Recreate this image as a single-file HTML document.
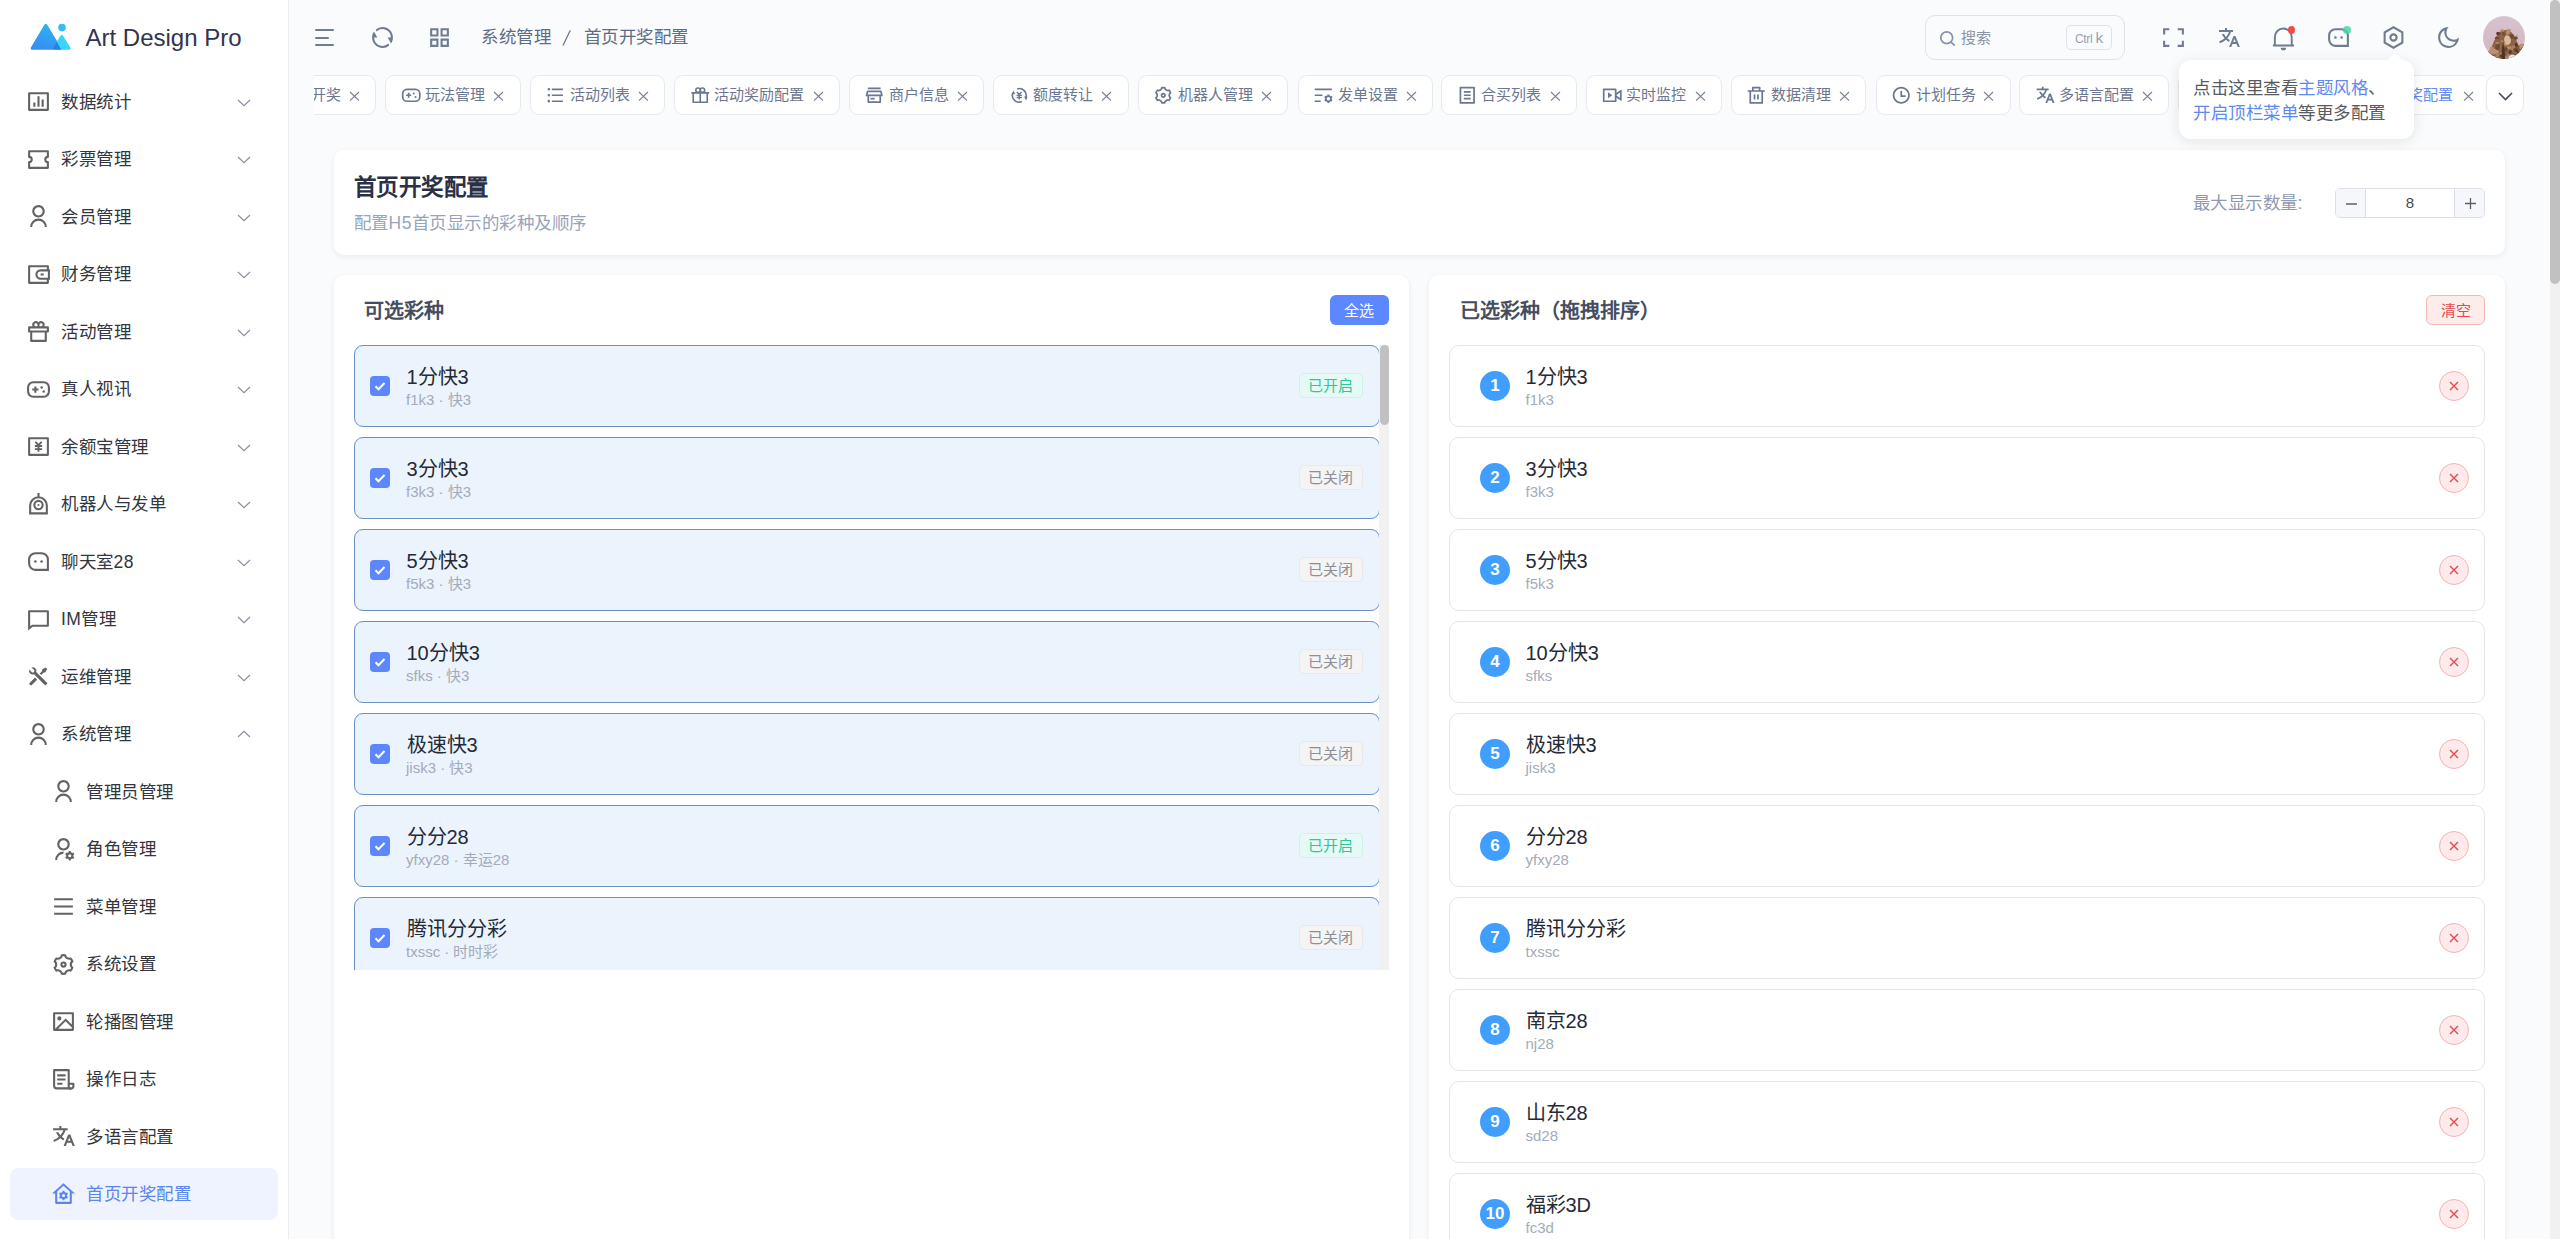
<!DOCTYPE html><html lang="zh-CN"><head><meta charset="utf-8"><title>首页开奖配置</title><style>
*{box-sizing:border-box;margin:0;padding:0}
html,body{width:2560px;height:1239px;overflow:hidden}
body{background:#fafbfc;font-family:"Liberation Sans",sans-serif;position:relative;color:#2d3039}
.ic{position:absolute;display:block}
#side{position:absolute;left:0;top:0;width:289px;height:1239px;background:#fff;border-right:1px solid #e9ebf0}
.logo-t{position:absolute;left:85.5px;top:22.5px;font-size:24px;line-height:30px;color:#30354f;white-space:nowrap}
.mt{position:absolute;left:61px;font-size:17.5px;letter-spacing:0.5px;line-height:24px;white-space:nowrap;color:#33363e}
.act{position:absolute;left:10px;width:268px;height:51.5px;border-radius:8px;background:#eef3ff}
.hamb i{position:absolute;left:315px;height:2.2px;background:#707c90;border-radius:1px}
.bc{position:absolute;top:24px;font-size:17.5px;letter-spacing:0.5px;line-height:26px;color:#5f6d84;white-space:nowrap}
.search{position:absolute;left:1925px;top:15px;width:200px;height:45px;border:1px solid #dfe2e8;border-radius:10px}
.stxt{position:absolute;left:1960.5px;top:26px;font-size:15px;line-height:24px;color:#8a94a6}
.kbd{position:absolute;left:2066px;top:25px;width:46px;height:25px;border:1px solid #dfe2e8;border-radius:5px;font-size:12.5px;line-height:23px;text-align:center;color:#98a1b2;letter-spacing:-0.3px}
.dot{position:absolute;width:8px;height:8px;border-radius:50%}
#tabs{position:absolute;left:314px;top:75px;width:2171px;height:40px;overflow:hidden}
.tab{position:absolute;top:0;height:39.5px;background:#fff;border:1px solid #e7e9ee;border-radius:9px}
.tt{position:absolute;left:39px;top:7px;font-size:15px;line-height:24px;white-space:nowrap}
.tabmore{position:absolute;left:2485.6px;top:75.3px;width:38.8px;height:39.4px;background:#fff;border:1px solid #e7e9ee;border-radius:10px}
.card{position:absolute;background:#fff;border-radius:10px;box-shadow:0 2px 6px rgba(20,30,60,0.07)}
.h1{position:absolute;left:353.5px;top:173px;font-size:22.5px;letter-spacing:-0.5px;line-height:30px;font-weight:bold;color:#2a3146;white-space:nowrap}
.h1s{position:absolute;left:353.5px;top:210px;font-size:17.5px;letter-spacing:0.5px;line-height:26px;color:#99a4ba;white-space:nowrap}
.lbl{position:absolute;left:2192.5px;top:190px;font-size:17.5px;letter-spacing:0.5px;line-height:26px;color:#8f9ab0;white-space:nowrap}
.inum{position:absolute;left:2335px;top:188px;width:150px;height:30px;border:1px solid #dcdfe6;border-radius:5px;overflow:hidden;background:#fff}
.ib{position:absolute;top:0;width:30px;height:28px;background:#f5f7fa;color:#555b66;font-size:18px;line-height:27px;text-align:center}
.ib.l{left:0;border-right:1px solid #dcdfe6}
.ib.r{right:0;border-left:1px solid #dcdfe6}
.iv{position:absolute;left:30px;right:30px;top:0;height:28px;text-align:center;font-size:15px;line-height:28px;color:#45494f}
.ptitle{position:absolute;top:297px;font-size:20px;line-height:28px;font-weight:bold;color:#454d61;white-space:nowrap}
.btnp{position:absolute;left:1329.75px;top:295px;width:59px;height:30px;border-radius:6px;background:#5d87ff;color:#fff;font-size:15px;line-height:32px;text-align:center}
.btnd{position:absolute;left:2426px;top:295px;width:59px;height:30px;border-radius:6px;background:#fdecec;border:1px solid #f2b7b7;color:#e24b4b;font-size:15px;line-height:30px;text-align:center}
#llist{position:absolute;left:354px;top:345px;width:1035px;height:625px;overflow:hidden}
.li{position:absolute;left:0;width:1026px;height:81.5px;border:1px solid #6890c6;border-radius:9px;background:#ebf3fd}
.cb{position:absolute;left:15px;top:30px;width:20px;height:20px;border-radius:4px;background:#5d87ff}
.it{position:absolute;left:51.5px;top:18px;font-size:20px;line-height:26px;color:#252a36;white-space:nowrap}
.is{position:absolute;left:51px;top:43.5px;font-size:15px;line-height:20px;color:#a3abba;white-space:nowrap}
.tag{position:absolute;left:944px;top:27px;width:63.5px;height:24.5px;border-radius:5px;font-size:15px;line-height:24px;text-align:center}
.tag.on{background:#e6faf5;border:1px solid #cdf3e8;color:#2cc79c}
.tag.off{background:#f4f4f5;border:1px solid #e9e9eb;color:#8d9099}
.sbtrack{position:absolute;left:1025px;top:0;width:10px;height:625px;background:#f1f1f1}
.sbthumb{position:absolute;left:0.5px;top:0;width:9.5px;height:80px;border-radius:5px;background:#c1c1c1}
.ri{position:absolute;left:1449px;width:1036px;height:81.5px;border:1px solid #e4e6eb;border-radius:10px;background:#fff}
.num{position:absolute;left:30px;top:25px;width:30px;height:30px;border-radius:50%;background:#409eff;color:#fff;font-size:17px;font-weight:bold;line-height:30px;text-align:center}
.rm{position:absolute;left:989px;top:25px;width:30px;height:30px;border-radius:50%;background:#feeaea;border:1px solid #f3b3b3}
.pop{position:absolute;left:2178.5px;top:60px;width:235.5px;height:79px;background:#fff;border-radius:12px;box-shadow:0 2px 14px rgba(0,0,0,0.10)}
.arrow{position:absolute;left:210px;top:-5px;width:11.3px;height:11.3px;background:#fff;transform:rotate(45deg);border-radius:2px}
.pt{position:absolute;left:14.5px;font-size:17.5px;letter-spacing:0.5px;line-height:24px;color:#585b62;white-space:nowrap}
.bl{color:#6289f0}
.psb{position:absolute;left:2550px;top:0;width:10px;height:1239px;background:#f1f1f1}
.psbt{position:absolute;left:0;top:0;width:10px;height:284px;border-radius:5px;background:#c1c1c1}
</style></head><body><div id="side">
<svg class="ic" style="left:30px;top:23px;width:41px;height:28px" viewBox="0 0 41 28"><defs><linearGradient id="lg1" x1="0.6" y1="0" x2="0.2" y2="1"><stop offset="0" stop-color="#2ab2f6"/><stop offset="1" stop-color="#3a8cf0"/></linearGradient><clipPath id="bigc"><path d="M15.8 0.3L31.3 26.7H0.3Z"/></clipPath></defs><path d="M15.8 2.2L29.6 25.2H2.2Z" fill="url(#lg1)" stroke="url(#lg1)" stroke-width="3" stroke-linejoin="round"/><path d="M31.75 13.6L39.2 25.2H24.3Z" fill="#3dd4fb" stroke="#3dd4fb" stroke-width="3" stroke-linejoin="round"/><g clip-path="url(#bigc)"><path d="M31.75 13.6L39.2 25.2H24.3Z" fill="#2283e3" stroke="#2283e3" stroke-width="3" stroke-linejoin="round"/></g><circle cx="32" cy="4.6" r="3.8" fill="#38baf5"/></svg>
<div class="logo-t">Art Design Pro</div>
<svg class="ic" style="left:26px;top:89.0px;width:25px;height:25px;color:#636363" viewBox="0 0 24 24" fill="currentColor"><path d="M3 3h18a1 1 0 0 1 1 1v16a1 1 0 0 1-1 1H3a1 1 0 0 1-1-1V4a1 1 0 0 1 1-1zm1 2v14h16V5H4zm3 8h2v4H7v-4zm4-6h2v10h-2V7zm4 3h2v7h-2v-7z"/></svg>
<div class="mt" style="top:89.50px">数据统计</div>
<svg class="ic" style="left:237px;top:98.50px;width:14px;height:8px" viewBox="0 0 14 8"><path d="M1 1L7 6.7 13 1" fill="none" stroke="#8a90a0" stroke-width="1.2"/></svg>
<svg class="ic" style="left:26px;top:146.5px;width:25px;height:25px;color:#636363" viewBox="0 0 24 24" fill="currentColor"><path fill="none" stroke="currentColor" stroke-width="2" stroke-linejoin="round" d="M3 4H21V9.5A2.5 2.5 0 0 0 21 14.5V20H3V14.5A2.5 2.5 0 0 0 3 9.5Z"/></svg>
<div class="mt" style="top:147.00px">彩票管理</div>
<svg class="ic" style="left:237px;top:156.00px;width:14px;height:8px" viewBox="0 0 14 8"><path d="M1 1L7 6.7 13 1" fill="none" stroke="#8a90a0" stroke-width="1.2"/></svg>
<svg class="ic" style="left:26px;top:204.0px;width:25px;height:25px;color:#636363" viewBox="0 0 24 24" fill="currentColor"><path d="M4 22a8 8 0 1 1 16 0h-2a6 6 0 1 0-12 0H4zm8-9c-3.315 0-6-2.685-6-6s2.685-6 6-6 6 2.685 6 6-2.685 6-6 6zm0-2c2.21 0 4-1.790 4-4s-1.79-4-4-4-4 1.79-4 4 1.79 4 4 4z"/></svg>
<div class="mt" style="top:204.50px">会员管理</div>
<svg class="ic" style="left:237px;top:213.50px;width:14px;height:8px" viewBox="0 0 14 8"><path d="M1 1L7 6.7 13 1" fill="none" stroke="#8a90a0" stroke-width="1.2"/></svg>
<svg class="ic" style="left:26px;top:261.5px;width:25px;height:25px;color:#636363" viewBox="0 0 24 24" fill="currentColor"><path d="M22 7h1v10h-1v3a1 1 0 0 1-1 1H3a1 1 0 0 1-1-1V4a1 1 0 0 1 1-1h18a1 1 0 0 1 1 1v3zm-2 10h-6a5 5 0 0 1 0-10h6V5H4v14h16v-2zm1-2V9h-7a3 3 0 0 0 0 6h7zm-7-4h3v2h-3v-2z"/></svg>
<div class="mt" style="top:262.00px">财务管理</div>
<svg class="ic" style="left:237px;top:271.00px;width:14px;height:8px" viewBox="0 0 14 8"><path d="M1 1L7 6.7 13 1" fill="none" stroke="#8a90a0" stroke-width="1.2"/></svg>
<svg class="ic" style="left:26px;top:319.0px;width:25px;height:25px;color:#636363" viewBox="0 0 24 24" fill="currentColor"><path d="M14.5 2a3.5 3.5 0 0 1 3.163 5.001L21 7a1 1 0 0 1 1 1v4a1 1 0 0 1-1 1h-1v8a1 1 0 0 1-1 1H5a1 1 0 0 1-1-1v-8H3a1 1 0 0 1-1-1V8a1 1 0 0 1 1-1l3.337.001a3.5 3.5 0 0 1 5.664-3.95A3.48 3.48 0 0 1 14.5 2zM18 13H6v7h12v-7zm2-4H4v2h16V9zM9.5 4a1.5 1.5 0 0 0-.144 2.993L9.5 7H11V5.5a1.5 1.5 0 0 0-1.356-1.493L9.5 4zm5 0l-.144.007a1.5 1.5 0 0 0-1.35 1.349L13 5.5V7h1.5l.144-.007a1.5 1.5 0 0 0 0-2.986L14.5 4z"/></svg>
<div class="mt" style="top:319.50px">活动管理</div>
<svg class="ic" style="left:237px;top:328.50px;width:14px;height:8px" viewBox="0 0 14 8"><path d="M1 1L7 6.7 13 1" fill="none" stroke="#8a90a0" stroke-width="1.2"/></svg>
<svg class="ic" style="left:26px;top:376.5px;width:25px;height:25px;color:#636363" viewBox="0 0 24 24" fill="currentColor"><path d="M17 4a6 6 0 0 1 6 6v4a6 6 0 0 1-6 6H7a6 6 0 0 1-6-6v-4a6 6 0 0 1 6-6h10zm0 2H7a4 4 0 0 0-4 4v4a4 4 0 0 0 4 4h10a4 4 0 0 0 4-4v-4a4 4 0 0 0-4-4zm-7 3v2h2v2H10v2H8v-2H6v-2h2V9h2z"/><circle cx="17" cy="14" r="1.2"/><circle cx="15" cy="10" r="1.2"/></svg>
<div class="mt" style="top:377.00px">真人视讯</div>
<svg class="ic" style="left:237px;top:386.00px;width:14px;height:8px" viewBox="0 0 14 8"><path d="M1 1L7 6.7 13 1" fill="none" stroke="#8a90a0" stroke-width="1.2"/></svg>
<svg class="ic" style="left:26px;top:434.0px;width:25px;height:25px;color:#636363" viewBox="0 0 24 24" fill="currentColor"><path d="M3 3h18a1 1 0 0 1 1 1v16a1 1 0 0 1-1 1H3a1 1 0 0 1-1-1V4a1 1 0 0 1 1-1zm1 2v14h16V5H4z"/><path fill="none" stroke="currentColor" stroke-width="1.8" d="M9 7.5l3 3.2 3-3.2M12 10.7V17M8.5 11.5h7M8.5 14.5h7"/></svg>
<div class="mt" style="top:434.50px">余额宝管理</div>
<svg class="ic" style="left:237px;top:443.50px;width:14px;height:8px" viewBox="0 0 14 8"><path d="M1 1L7 6.7 13 1" fill="none" stroke="#8a90a0" stroke-width="1.2"/></svg>
<svg class="ic" style="left:26px;top:491.5px;width:25px;height:25px;color:#636363" viewBox="0 0 24 24" fill="currentColor"><path fill="none" stroke="currentColor" stroke-width="2" d="M4 20.5V13A8 8 0 0 1 20 13V20.5ZM12 1V5"/><circle cx="12" cy="12.5" r="4" fill="none" stroke="currentColor" stroke-width="2"/><circle cx="12" cy="12.5" r="1"/></svg>
<div class="mt" style="top:492.00px">机器人与发单</div>
<svg class="ic" style="left:237px;top:501.00px;width:14px;height:8px" viewBox="0 0 14 8"><path d="M1 1L7 6.7 13 1" fill="none" stroke="#8a90a0" stroke-width="1.2"/></svg>
<svg class="ic" style="left:26px;top:549.0px;width:25px;height:25px;color:#636363" viewBox="0 0 24 24" fill="currentColor"><path fill="none" stroke="currentColor" stroke-width="2" d="M9 4H15A6 6 0 0 1 21 10V20H9A6 6 0 0 1 3 14V10A6 6 0 0 1 9 4Z"/><circle cx="9" cy="12" r="1.25"/><circle cx="15" cy="12" r="1.25"/></svg>
<div class="mt" style="top:549.50px">聊天室28</div>
<svg class="ic" style="left:237px;top:558.50px;width:14px;height:8px" viewBox="0 0 14 8"><path d="M1 1L7 6.7 13 1" fill="none" stroke="#8a90a0" stroke-width="1.2"/></svg>
<svg class="ic" style="left:26px;top:606.5px;width:25px;height:25px;color:#636363" viewBox="0 0 24 24" fill="currentColor"><path d="M6.455 19L2 22.5V4a1 1 0 0 1 1-1h18a1 1 0 0 1 1 1v14a1 1 0 0 1-1 1H6.455zm-.692-2H20V5H4v13.385L5.763 17z"/></svg>
<div class="mt" style="top:607.00px">IM管理</div>
<svg class="ic" style="left:237px;top:616.00px;width:14px;height:8px" viewBox="0 0 14 8"><path d="M1 1L7 6.7 13 1" fill="none" stroke="#8a90a0" stroke-width="1.2"/></svg>
<svg class="ic" style="left:26px;top:664.0px;width:25px;height:25px;color:#636363" viewBox="0 0 24 24" fill="currentColor"><path d="M5.33 3.271a3.5 3.5 0 0 1 4.472 4.474L20.647 18.59l-2.122 2.121L7.68 9.867a3.5 3.5 0 0 1-4.472-4.474L5.444 7.63a1.5 1.5 0 1 0 2.121-2.121L5.329 3.27zm10.367 1.884l3.182-1.768 1.414 1.414-1.768 3.182-1.768.354-2.12 2.121-1.415-1.414 2.121-2.121.354-1.768zm-7.071 7.778l2.121 2.122-4.95 4.95A1.5 1.5 0 0 1 3.58 17.99l.097-.107 4.95-4.95z"/></svg>
<div class="mt" style="top:664.50px">运维管理</div>
<svg class="ic" style="left:237px;top:673.50px;width:14px;height:8px" viewBox="0 0 14 8"><path d="M1 1L7 6.7 13 1" fill="none" stroke="#8a90a0" stroke-width="1.2"/></svg>
<svg class="ic" style="left:26px;top:721.5px;width:25px;height:25px;color:#636363" viewBox="0 0 24 24" fill="currentColor"><path d="M4 22a8 8 0 1 1 16 0h-2a6 6 0 1 0-12 0H4zm8-9c-3.315 0-6-2.685-6-6s2.685-6 6-6 6 2.685 6 6-2.685 6-6 6zm0-2c2.21 0 4-1.790 4-4s-1.79-4-4-4-4 1.79-4 4 1.79 4 4 4z"/></svg>
<div class="mt" style="top:722.00px">系统管理</div>
<svg class="ic" style="left:237px;top:730.00px;width:14px;height:8px" viewBox="0 0 14 8"><path d="M1 7L7 1.3 13 7" fill="none" stroke="#8a90a0" stroke-width="1.2"/></svg>
<svg class="ic" style="left:51px;top:779.0px;width:25px;height:25px;color:#636363" viewBox="0 0 24 24" fill="currentColor"><path d="M4 22a8 8 0 1 1 16 0h-2a6 6 0 1 0-12 0H4zm8-9c-3.315 0-6-2.685-6-6s2.685-6 6-6 6 2.685 6 6-2.685 6-6 6zm0-2c2.21 0 4-1.790 4-4s-1.79-4-4-4-4 1.79-4 4 1.79 4 4 4z"/></svg>
<div class="mt" style="left:86px;top:779.50px;color:#33363e">管理员管理</div>
<svg class="ic" style="left:51px;top:836.5px;width:25px;height:25px;color:#636363" viewBox="0 0 24 24" fill="currentColor"><path d="M12 14v2a6 6 0 0 0-6 6H4a8 8 0 0 1 8-8zm0-1c-3.315 0-6-2.685-6-6s2.685-6 6-6 6 2.685 6 6-2.685 6-6 6zm0-2c2.21 0 4-1.79 4-4s-1.79-4-4-4-4 1.79-4 4 1.79 4 4 4zm2.595 7.812a3.51 3.51 0 0 1 0-1.623l-.992-.573 1-1.732.992.573A3.496 3.496 0 0 1 17 14.645V13.5h2v1.145c.532.158 1.012.44 1.405.812l.992-.573 1 1.732-.992.573a3.51 3.51 0 0 1 0 1.622l.992.573-1 1.732-.992-.573a3.496 3.496 0 0 1-1.405.812V22.5h-2v-1.145a3.496 3.496 0 0 1-1.405-.812l-.992.573-1-1.732.992-.572zM18 19.5a1.5 1.5 0 1 0 0-3 1.5 1.5 0 0 0 0 3z"/></svg>
<div class="mt" style="left:86px;top:837.00px;color:#33363e">角色管理</div>
<svg class="ic" style="left:51px;top:894.0px;width:25px;height:25px;color:#636363" viewBox="0 0 24 24" fill="currentColor"><path d="M3 4h18v2H3V4zm0 7h18v2H3v-2zm0 7h18v2H3v-2z"/></svg>
<div class="mt" style="left:86px;top:894.50px;color:#33363e">菜单管理</div>
<svg class="ic" style="left:51px;top:951.5px;width:25px;height:25px;color:#636363" viewBox="0 0 24 24" fill="currentColor"><path d="M3.34 17a10.018 10.018 0 0 1-.978-2.326 3 3 0 0 0 .002-5.347A9.99 9.99 0 0 1 4.865 4.99a3 3 0 0 0 4.631-2.674 9.99 9.99 0 0 1 5.007.002 3 3 0 0 0 4.632 2.672c.579.59 1.093 1.261 1.525 2.01.433.749.757 1.53.978 2.326a3 3 0 0 0-.002 5.347 9.99 9.99 0 0 1-2.501 4.337 3 3 0 0 0-4.631 2.674 9.99 9.99 0 0 1-5.007-.002 3 3 0 0 0-4.632-2.672A10.018 10.018 0 0 1 3.34 17zm5.66.196a4.993 4.993 0 0 1 2.25 2.77c.499.047 1 .048 1.499.001A4.993 4.993 0 0 1 15 17.197a4.993 4.993 0 0 1 3.525-.565c.29-.408.54-.843.748-1.298A4.993 4.993 0 0 1 18 12c0-1.26.47-2.437 1.273-3.334a8.126 8.126 0 0 0-.75-1.298A4.993 4.993 0 0 1 15 6.804a4.993 4.993 0 0 1-2.25-2.77c-.499-.047-1-.048-1.499-.001A4.993 4.993 0 0 1 9 6.803a4.993 4.993 0 0 1-3.525.565 7.99 7.99 0 0 0-.748 1.298A4.993 4.993 0 0 1 6 12c0 1.26-.47 2.437-1.273 3.334a8.126 8.126 0 0 0 .75 1.298A4.993 4.993 0 0 1 9 17.196zM12 15a3 3 0 1 1 0-6 3 3 0 0 1 0 6zm0-2a1 1 0 1 0 0-2 1 1 0 0 0 0 2z"/></svg>
<div class="mt" style="left:86px;top:952.00px;color:#33363e">系统设置</div>
<svg class="ic" style="left:51px;top:1009.0px;width:25px;height:25px;color:#636363" viewBox="0 0 24 24" fill="currentColor"><path d="M4.828 21l-.02.02-.021-.02H2.992A.993.993 0 0 1 2 20.007V3.993A1 1 0 0 1 2.992 3h18.016c.548 0 .992.445.992.993v16.014a1 1 0 0 1-.992.993H4.828zM20 15V5H4v14L14 9l6 6zm0 2.828l-6-6L6.828 19H20v-1.172zM8 11a2 2 0 1 1 0-4 2 2 0 0 1 0 4z"/></svg>
<div class="mt" style="left:86px;top:1009.50px;color:#33363e">轮播图管理</div>
<svg class="ic" style="left:51px;top:1066.5px;width:25px;height:25px;color:#636363" viewBox="0 0 24 24" fill="currentColor"><path fill="none" stroke="currentColor" stroke-width="2" stroke-linejoin="round" d="M17 16V3H3V18a2.5 2.5 0 0 0 2.5 2.5H19.5A2 2 0 0 0 21.5 18.5V16H17V19A1.5 1.5 0 0 0 19.5 20.5"/><path d="M6 7h8v2H6zM6 11h8v2H6zM6 15h5v2H6z"/></svg>
<div class="mt" style="left:86px;top:1067.00px;color:#33363e">操作日志</div>
<svg class="ic" style="left:51px;top:1124.0px;width:25px;height:25px;color:#636363" viewBox="0 0 24 24" fill="currentColor"><path d="M18.5 10l4.4 11h-2.155l-1.201-3h-4.09l-1.199 3h-2.154L16.5 10h2zM10 2v2h6v2h-1.968a18.222 18.222 0 0 1-3.62 6.301 14.864 14.864 0 0 0 2.336 1.707l-.751 1.878A17.015 17.015 0 0 1 9 13.725a16.676 16.676 0 0 1-6.201 3.548l-.536-1.929a14.7 14.7 0 0 0 5.327-3.042A18.078 18.078 0 0 1 4.767 8h2.24A16.032 16.032 0 0 0 9 10.877a16.165 16.165 0 0 0 2.91-4.876L2 6V4h6V2h2zm7.5 10.885L16.253 16h2.492L17.5 12.885z"/></svg>
<div class="mt" style="left:86px;top:1124.50px;color:#33363e">多语言配置</div>
<div class="act" style="top:1168.25px"></div>
<svg class="ic" style="left:51px;top:1181.5px;width:25px;height:25px;color:#5c86ec" viewBox="0 0 24 24" fill="currentColor"><path d="M19 21H5a1 1 0 0 1-1-1v-9H1l10.327-9.388a1 1 0 0 1 1.346 0L23 11h-3v9a1 1 0 0 1-1 1zM6 19h12V9.157l-6-5.454-6 5.454V19zm2.591-5.191a3.508 3.508 0 0 1 0-1.622l-.991-.573 1-1.732.991.573a3.495 3.495 0 0 1 1.404-.812V8.5h2v1.144c.532.159 1.01.44 1.403.812l.992-.573 1 1.731-.991.573a3.508 3.508 0 0 1 0 1.623l.991.572-1 1.731-.991-.572a3.495 3.495 0 0 1-1.404.811v1.145h-2V16.35a3.495 3.495 0 0 1-1.403-.812l-.992.573-1-1.731.991-.573zm3.404.688a1.5 1.5 0 1 0 0-2.998 1.5 1.5 0 0 0 0 2.998z"/></svg>
<div class="mt" style="left:86px;top:1182.00px;color:#5c86ec">首页开奖配置</div>
</div>
<div class="hamb"><i style="top:29px;width:19px"></i><i style="top:37px;width:13.5px"></i><i style="top:44px;width:19px"></i></div>
<svg class="ic" style="left:370px;top:25px;width:25px;height:25px;color:#707c90" viewBox="0 0 24 24" fill="currentColor"><path d="M5.463 4.433A9.961 9.961 0 0 1 12 2c5.523 0 10 4.477 10 10 0 2.136-.67 4.116-1.81 5.74L17 12h3A8 8 0 0 0 6.46 6.228l-.997-1.795zm13.074 15.134A9.961 9.961 0 0 1 12 22C6.477 22 2 17.523 2 12c0-2.136.67-4.116 1.81-5.74L7 12H4a8 8 0 0 0 13.54 5.772l.997 1.795z"/></svg>
<svg class="ic" style="left:427px;top:25px;width:25px;height:25px;color:#707c90" viewBox="0 0 24 24" fill="currentColor"><path fill="none" stroke="currentColor" stroke-width="2" d="M4 4h6v6H4zM14 4h6v6h-6zM4 14h6v6H4zM14 14h6v6h-6z"/></svg>
<div class="bc" style="left:481px">系统管理</div><svg class="ic" style="left:560px;top:28px;width:13px;height:20px" viewBox="0 0 13 20"><path d="M3 17.5L10.3 2.2" stroke="#6f7c92" stroke-width="1.3"/></svg><div class="bc" style="left:583.5px">首页开奖配置</div>
<div class="search"></div>
<svg class="ic" style="left:1938px;top:28.5px;width:19px;height:19px;color:#8792a6" viewBox="0 0 24 24" fill="none" stroke="currentColor" stroke-width="2.2"><circle cx="11" cy="11" r="7.5"/><path d="M16.5 16.5L21 21"/></svg>
<div class="stxt">搜索</div>
<div class="kbd"><span style="font-size:12px">Ctrl</span> <span style="font-size:15.5px">k</span></div>
<svg class="ic" style="left:2160.5px;top:25px;width:25px;height:25px;color:#707c90" viewBox="0 0 24 24" fill="currentColor"><path d="M16 3h6v6h-2V5h-4V3zM2 3h6v2H4v4H2V3zm18 16v-4h2v6h-6v-2h4zM4 19h4v2H2v-6h2v4z"/></svg>
<svg class="ic" style="left:2217px;top:25.5px;width:24px;height:24px;color:#707c90" viewBox="0 0 24 24" fill="currentColor"><path d="M18.5 10l4.4 11h-2.155l-1.201-3h-4.09l-1.199 3h-2.154L16.5 10h2zM10 2v2h6v2h-1.968a18.222 18.222 0 0 1-3.62 6.301 14.864 14.864 0 0 0 2.336 1.707l-.751 1.878A17.015 17.015 0 0 1 9 13.725a16.676 16.676 0 0 1-6.201 3.548l-.536-1.929a14.7 14.7 0 0 0 5.327-3.042A18.078 18.078 0 0 1 4.767 8h2.24A16.032 16.032 0 0 0 9 10.877a16.165 16.165 0 0 0 2.91-4.876L2 6V4h6V2h2zm7.5 10.885L16.253 16h2.492L17.5 12.885z"/></svg>
<svg class="ic" style="left:2271px;top:25.5px;width:25px;height:25px;color:#707c90" viewBox="0 0 24 24" fill="currentColor"><path fill="none" stroke="currentColor" stroke-width="1.85" d="M3.7 18.8V10.5A8.1 8.1 0 0 1 19.9 10.5V18.8M1.8 18.8H22.1"/><path d="M9.4 20.8H14.5A2.55 2.55 0 0 1 9.4 20.8Z"/></svg>
<div class="dot" style="left:2288px;top:26.2px;width:7px;background:#f74848"></div>
<svg class="ic" style="left:2325.5px;top:25px;width:25px;height:25px;color:#707c90" viewBox="0 0 24 24" fill="currentColor"><path fill="none" stroke="currentColor" stroke-width="2" d="M9 4H15A6 6 0 0 1 21 10V20H9A6 6 0 0 1 3 14V10A6 6 0 0 1 9 4Z"/><circle cx="9" cy="12" r="1.25"/><circle cx="15" cy="12" r="1.25"/></svg>
<div class="dot" style="left:2343px;top:26px;background:rgba(70,215,168,0.85)"></div>
<svg class="ic" style="left:2381px;top:25px;width:25px;height:25px;color:#707c90" viewBox="0 0 24 24" fill="currentColor"><path d="M12 1l9.5 5.5v11L12 23l-9.5-5.5v-11L12 1zm0 2.311L4.5 7.653v8.694l7.5 4.342 7.5-4.342V7.653L12 3.311zM12 16a4 4 0 1 1 0-8 4 4 0 0 1 0 8zm0-2a2 2 0 1 0 0-4 2 2 0 0 0 0 4z"/></svg>
<svg class="ic" style="left:2435.5px;top:25px;width:25px;height:25px;color:#707c90" viewBox="0 0 24 24" fill="currentColor"><path d="M10 7a7 7 0 0 0 12 4.9v.1c0 5.523-4.477 10-10 10S2 17.523 2 12 6.477 2 12 2h.1A6.979 6.979 0 0 0 10 7zm-6 5a8 8 0 0 0 15.062 3.762A9 9 0 0 1 8.238 4.938 7.999 7.999 0 0 0 4 12z"/></svg>
<svg class="ic" style="left:2483px;top:16px;width:42px;height:43px" viewBox="0 0 42 43"><defs><clipPath id="av"><ellipse cx="21" cy="21.5" rx="21" ry="21.4"/></clipPath><linearGradient id="avbg" x1="0" y1="0" x2="0" y2="1"><stop offset="0" stop-color="#d5c3cf"/><stop offset="1" stop-color="#d6b4bd"/></linearGradient></defs><g clip-path="url(#av)"><rect width="42" height="43" fill="url(#avbg)"/><path d="M5 43 C7 34 10 27 13 21 C16 15 20 13.5 24 14 C29 15 32 20 34 26 C36 31 39 35 42 38 L42 43Z" fill="#8a6246"/><ellipse cx="14.1" cy="29.8" rx="1.7" ry="1.7" fill="#7d563a"/><ellipse cx="25.7" cy="31.6" rx="2.5" ry="1.6" fill="#b89270"/><ellipse cx="14.0" cy="42.9" rx="1.9" ry="2.0" fill="#5a3a26"/><ellipse cx="19.5" cy="39.0" rx="1.5" ry="1.2" fill="#b89270"/><ellipse cx="19.3" cy="14.4" rx="2.3" ry="1.2" fill="#b89270"/><ellipse cx="7.5" cy="36.6" rx="2.4" ry="1.3" fill="#b89270"/><ellipse cx="30.4" cy="39.5" rx="2.2" ry="2.1" fill="#5a3a26"/><ellipse cx="30.8" cy="30.7" rx="2.5" ry="1.2" fill="#a98260"/><ellipse cx="13.4" cy="42.0" rx="1.8" ry="1.8" fill="#a98260"/><ellipse cx="20.3" cy="38.2" rx="2.0" ry="1.6" fill="#5a3a26"/><ellipse cx="25.9" cy="40.2" rx="2.2" ry="2.1" fill="#a98260"/><ellipse cx="39.7" cy="33.5" rx="1.4" ry="2.0" fill="#b89270"/><ellipse cx="36.8" cy="30.5" rx="2.2" ry="1.3" fill="#b89270"/><ellipse cx="15.1" cy="17.6" rx="1.9" ry="1.8" fill="#5a3a26"/><ellipse cx="9.0" cy="37.2" rx="1.8" ry="1.2" fill="#a98260"/><ellipse cx="20.5" cy="26.0" rx="1.4" ry="1.7" fill="#6e4a32"/><ellipse cx="18.8" cy="31.0" rx="2.0" ry="2.1" fill="#a98260"/><ellipse cx="23.2" cy="43.0" rx="1.6" ry="1.1" fill="#b89270"/><ellipse cx="24.2" cy="41.5" rx="2.6" ry="1.3" fill="#a98260"/><ellipse cx="38.6" cy="40.0" rx="1.7" ry="1.6" fill="#b89270"/><ellipse cx="19.1" cy="39.1" rx="2.2" ry="1.1" fill="#b89270"/><ellipse cx="15.2" cy="32.4" rx="2.2" ry="2.1" fill="#5a3a26"/><ellipse cx="39.2" cy="29.1" rx="2.0" ry="1.0" fill="#5a3a26"/><ellipse cx="18.8" cy="31.1" rx="1.4" ry="1.8" fill="#a98260"/><ellipse cx="21.9" cy="33.7" rx="1.7" ry="1.8" fill="#7d563a"/><ellipse cx="22.6" cy="31.1" rx="2.5" ry="1.0" fill="#a98260"/><ellipse cx="14.5" cy="27.2" rx="2.0" ry="1.4" fill="#a98260"/><ellipse cx="12.3" cy="36.0" rx="2.4" ry="1.3" fill="#5a3a26"/><ellipse cx="9.6" cy="37.6" rx="2.6" ry="1.8" fill="#8c6446"/><ellipse cx="16.5" cy="20.5" rx="2.3" ry="1.3" fill="#8c6446"/><ellipse cx="29.1" cy="32.8" rx="1.3" ry="1.7" fill="#a98260"/><ellipse cx="28.9" cy="20.5" rx="2.3" ry="2.2" fill="#6e4a32"/><ellipse cx="17.4" cy="32.9" rx="2.4" ry="1.5" fill="#8c6446"/><ellipse cx="34.4" cy="30.7" rx="2.4" ry="1.4" fill="#7d563a"/><ellipse cx="8.9" cy="32.0" rx="2.0" ry="1.5" fill="#b89270"/><ellipse cx="33.0" cy="21.9" rx="1.7" ry="1.5" fill="#5a3a26"/><ellipse cx="25.3" cy="15.0" rx="1.8" ry="1.2" fill="#5a3a26"/><ellipse cx="38.1" cy="39.5" rx="2.6" ry="1.5" fill="#7d563a"/><ellipse cx="13.6" cy="35.6" rx="2.4" ry="1.8" fill="#b89270"/><ellipse cx="38.8" cy="29.8" rx="2.4" ry="2.0" fill="#b89270"/><ellipse cx="33.3" cy="28.9" rx="1.5" ry="2.1" fill="#5a3a26"/><ellipse cx="25.6" cy="14.4" rx="2.2" ry="1.2" fill="#a98260"/><ellipse cx="24.3" cy="15.5" rx="2.5" ry="1.1" fill="#8c6446"/><ellipse cx="14.6" cy="39.0" rx="1.9" ry="1.9" fill="#a98260"/><ellipse cx="14.1" cy="21.9" rx="2.4" ry="1.2" fill="#6e4a32"/><ellipse cx="22.6" cy="30.6" rx="1.8" ry="1.9" fill="#8c6446"/><ellipse cx="15.1" cy="29.3" rx="1.8" ry="1.6" fill="#6e4a32"/><ellipse cx="35.1" cy="36.5" rx="1.3" ry="1.1" fill="#5a3a26"/><ellipse cx="39.1" cy="38.8" rx="1.3" ry="1.6" fill="#a98260"/><ellipse cx="19.1" cy="25.3" rx="1.6" ry="1.3" fill="#a98260"/><ellipse cx="20.6" cy="17.7" rx="1.2" ry="1.9" fill="#6e4a32"/><ellipse cx="25.3" cy="15.2" rx="1.8" ry="1.8" fill="#b89270"/><ellipse cx="18.9" cy="37.2" rx="2.1" ry="1.5" fill="#a98260"/><ellipse cx="27.3" cy="36.0" rx="1.6" ry="2.1" fill="#5a3a26"/><ellipse cx="21.7" cy="21.1" rx="2.0" ry="1.8" fill="#6e4a32"/><ellipse cx="33.3" cy="20.5" rx="1.4" ry="1.0" fill="#a98260"/><ellipse cx="18.7" cy="40.0" rx="2.3" ry="1.3" fill="#5a3a26"/><ellipse cx="29.5" cy="41.2" rx="2.2" ry="2.0" fill="#b89270"/><ellipse cx="32.9" cy="33.4" rx="2.2" ry="1.7" fill="#6e4a32"/><ellipse cx="33.6" cy="34.8" rx="1.9" ry="1.3" fill="#5a3a26"/><ellipse cx="9.4" cy="39.5" rx="1.5" ry="1.0" fill="#6e4a32"/><ellipse cx="22.4" cy="34.2" rx="1.6" ry="1.4" fill="#6e4a32"/><ellipse cx="7.2" cy="36.3" rx="1.9" ry="1.9" fill="#6e4a32"/><ellipse cx="24.9" cy="16.9" rx="2.0" ry="1.7" fill="#b89270"/><ellipse cx="39.9" cy="32.7" rx="1.8" ry="1.8" fill="#5a3a26"/><ellipse cx="14.6" cy="31.4" rx="2.5" ry="1.7" fill="#6e4a32"/><ellipse cx="18.8" cy="20.8" rx="2.5" ry="2.0" fill="#8c6446"/><ellipse cx="20.1" cy="30.5" rx="2.0" ry="2.1" fill="#7d563a"/><ellipse cx="22.4" cy="32.6" rx="2.5" ry="1.2" fill="#6e4a32"/><ellipse cx="22.9" cy="28.0" rx="2.2" ry="2.1" fill="#b89270"/><ellipse cx="24.5" cy="24" rx="3.4" ry="4.8" transform="rotate(-12 24.5 24)" fill="#dcb89e"/><path d="M20 27 C21.5 32 22 37 22 43 L18.5 43 C18.5 37 19 32 20 27Z" fill="#4e3222"/><ellipse cx="10" cy="35.5" rx="4" ry="3" fill="#c08d6e"/><path d="M25 43 C26 39.5 28 38 30.5 38.5 C32.5 39 33.5 40.5 33.5 43Z" fill="#dfe8ea"/></g></svg>
<div id="tabs">
<div class="tab" style="left:-73.00px;width:135.00px"><svg style="position:absolute;left:14.3px;top:8.7px;width:20.5px;height:20.5px;color:#6b7790" viewBox="0 0 24 24" fill="currentColor"><path d="M3.34 17a10.018 10.018 0 0 1-.978-2.326 3 3 0 0 0 .002-5.347A9.99 9.99 0 0 1 4.865 4.99a3 3 0 0 0 4.631-2.674 9.99 9.99 0 0 1 5.007.002 3 3 0 0 0 4.632 2.672c.579.59 1.093 1.261 1.525 2.01.433.749.757 1.53.978 2.326a3 3 0 0 0-.002 5.347 9.99 9.99 0 0 1-2.501 4.337 3 3 0 0 0-4.631 2.674 9.99 9.99 0 0 1-5.007-.002 3 3 0 0 0-4.632-2.672A10.018 10.018 0 0 1 3.34 17zm5.66.196a4.993 4.993 0 0 1 2.25 2.77c.499.047 1 .048 1.499.001A4.993 4.993 0 0 1 15 17.197a4.993 4.993 0 0 1 3.525-.565c.29-.408.54-.843.748-1.298A4.993 4.993 0 0 1 18 12c0-1.26.47-2.437 1.273-3.334a8.126 8.126 0 0 0-.75-1.298A4.993 4.993 0 0 1 15 6.804a4.993 4.993 0 0 1-2.25-2.77c-.499-.047-1-.048-1.499-.001A4.993 4.993 0 0 1 9 6.803a4.993 4.993 0 0 1-3.525.565 7.99 7.99 0 0 0-.748 1.298A4.993 4.993 0 0 1 6 12c0 1.26-.47 2.437-1.273 3.334a8.126 8.126 0 0 0 .75 1.298A4.993 4.993 0 0 1 9 17.196zM12 15a3 3 0 1 1 0-6 3 3 0 0 1 0 6zm0-2a1 1 0 1 0 0-2 1 1 0 0 0 0 2z"/></svg><span class="tt" style="color:#6b7790">首页开奖</span><svg style="position:absolute;right:15.5px;top:15px;width:11px;height:11px" viewBox="0 0 11 11"><path d="M1 1L10 9.6M10 1L1 9.6" stroke="#7a8497" stroke-width="1.2"/></svg></div>
<div class="tab" style="left:71.40px;width:135.20px"><svg style="position:absolute;left:14.3px;top:8.7px;width:20.5px;height:20.5px;color:#6b7790" viewBox="0 0 24 24" fill="currentColor"><path d="M17 4a6 6 0 0 1 6 6v4a6 6 0 0 1-6 6H7a6 6 0 0 1-6-6v-4a6 6 0 0 1 6-6h10zm0 2H7a4 4 0 0 0-4 4v4a4 4 0 0 0 4 4h10a4 4 0 0 0 4-4v-4a4 4 0 0 0-4-4zm-7 3v2h2v2H10v2H8v-2H6v-2h2V9h2z"/><circle cx="17" cy="14" r="1.2"/><circle cx="15" cy="10" r="1.2"/></svg><span class="tt" style="color:#6b7790">玩法管理</span><svg style="position:absolute;right:15.5px;top:15px;width:11px;height:11px" viewBox="0 0 11 11"><path d="M1 1L10 9.6M10 1L1 9.6" stroke="#7a8497" stroke-width="1.2"/></svg></div>
<div class="tab" style="left:215.50px;width:135.50px"><svg style="position:absolute;left:14.3px;top:8.7px;width:20.5px;height:20.5px;color:#6b7790" viewBox="0 0 24 24" fill="currentColor"><path d="M8 4h13v2H8V4zM4.5 6.5a1.5 1.5 0 1 1 0-3 1.5 1.5 0 0 1 0 3zm0 7a1.5 1.5 0 1 1 0-3 1.5 1.5 0 0 1 0 3zm0 6.9a1.5 1.5 0 1 1 0-3 1.5 1.5 0 0 1 0 3zM8 11h13v2H8v-2zm0 7h13v2H8v-2z"/></svg><span class="tt" style="color:#6b7790">活动列表</span><svg style="position:absolute;right:15.5px;top:15px;width:11px;height:11px" viewBox="0 0 11 11"><path d="M1 1L10 9.6M10 1L1 9.6" stroke="#7a8497" stroke-width="1.2"/></svg></div>
<div class="tab" style="left:360.25px;width:165.75px"><svg style="position:absolute;left:14.3px;top:8.7px;width:20.5px;height:20.5px;color:#6b7790" viewBox="0 0 24 24" fill="currentColor"><path fill="none" stroke="currentColor" stroke-width="1.9" d="M1.6 9.2H22.4M3.8 9.2V20.2H20.2V9.2M12 9.2V20.2"/><circle cx="9.4" cy="6.1" r="2.6" fill="none" stroke="currentColor" stroke-width="1.9"/><circle cx="14.6" cy="6.1" r="2.6" fill="none" stroke="currentColor" stroke-width="1.9"/></svg><span class="tt" style="color:#6b7790">活动奖励配置</span><svg style="position:absolute;right:15.5px;top:15px;width:11px;height:11px" viewBox="0 0 11 11"><path d="M1 1L10 9.6M10 1L1 9.6" stroke="#7a8497" stroke-width="1.2"/></svg></div>
<div class="tab" style="left:534.75px;width:135.50px"><svg style="position:absolute;left:14.3px;top:8.7px;width:20.5px;height:20.5px;color:#6b7790" viewBox="0 0 24 24" fill="currentColor"><path fill="none" stroke="currentColor" stroke-width="2" stroke-linejoin="round" d="M4.5 4H19.5M4.2 7.5H19.8L21 12.2H3ZM5 12.2V20H19V12.2"/><path d="M7.5 15h5v2h-5z"/></svg><span class="tt" style="color:#6b7790">商户信息</span><svg style="position:absolute;right:15.5px;top:15px;width:11px;height:11px" viewBox="0 0 11 11"><path d="M1 1L10 9.6M10 1L1 9.6" stroke="#7a8497" stroke-width="1.2"/></svg></div>
<div class="tab" style="left:679.25px;width:135.50px"><svg style="position:absolute;left:14.3px;top:8.7px;width:20.5px;height:20.5px;color:#6b7790" viewBox="0 0 24 24" fill="currentColor"><path fill="none" stroke="currentColor" stroke-width="1.9" d="M9.5 4.6A8 8 0 0 1 19.6 15M15 19.4A8 8 0 0 1 4.5 9"/><path d="M17.6 13.6L21.8 13.9 19.9 18zM3.3 11.2L7.2 10.2 5.1 6.4z"/><path fill="none" stroke="currentColor" stroke-width="1.7" d="M9.3 8.3L12 11.2 14.7 8.3M12 11.2V17M8.9 12.2h6.2M8.9 14.8h6.2"/></svg><span class="tt" style="color:#6b7790">额度转让</span><svg style="position:absolute;right:15.5px;top:15px;width:11px;height:11px" viewBox="0 0 11 11"><path d="M1 1L10 9.6M10 1L1 9.6" stroke="#7a8497" stroke-width="1.2"/></svg></div>
<div class="tab" style="left:823.50px;width:150.50px"><svg style="position:absolute;left:14.3px;top:8.7px;width:20.5px;height:20.5px;color:#6b7790" viewBox="0 0 24 24" fill="currentColor"><path d="M3.34 17a10.018 10.018 0 0 1-.978-2.326 3 3 0 0 0 .002-5.347A9.99 9.99 0 0 1 4.865 4.99a3 3 0 0 0 4.631-2.674 9.99 9.99 0 0 1 5.007.002 3 3 0 0 0 4.632 2.672c.579.59 1.093 1.261 1.525 2.01.433.749.757 1.53.978 2.326a3 3 0 0 0-.002 5.347 9.99 9.99 0 0 1-2.501 4.337 3 3 0 0 0-4.631 2.674 9.99 9.99 0 0 1-5.007-.002 3 3 0 0 0-4.632-2.672A10.018 10.018 0 0 1 3.34 17zm5.66.196a4.993 4.993 0 0 1 2.25 2.77c.499.047 1 .048 1.499.001A4.993 4.993 0 0 1 15 17.197a4.993 4.993 0 0 1 3.525-.565c.29-.408.54-.843.748-1.298A4.993 4.993 0 0 1 18 12c0-1.26.47-2.437 1.273-3.334a8.126 8.126 0 0 0-.75-1.298A4.993 4.993 0 0 1 15 6.804a4.993 4.993 0 0 1-2.25-2.77c-.499-.047-1-.048-1.499-.001A4.993 4.993 0 0 1 9 6.803a4.993 4.993 0 0 1-3.525.565 7.99 7.99 0 0 0-.748 1.298A4.993 4.993 0 0 1 6 12c0 1.26-.47 2.437-1.273 3.334a8.126 8.126 0 0 0 .75 1.298A4.993 4.993 0 0 1 9 17.196zM12 15a3 3 0 1 1 0-6 3 3 0 0 1 0 6zm0-2a1 1 0 1 0 0-2 1 1 0 0 0 0 2z"/></svg><span class="tt" style="color:#6b7790">机器人管理</span><svg style="position:absolute;right:15.5px;top:15px;width:11px;height:11px" viewBox="0 0 11 11"><path d="M1 1L10 9.6M10 1L1 9.6" stroke="#7a8497" stroke-width="1.2"/></svg></div>
<div class="tab" style="left:983.50px;width:135.50px"><svg style="position:absolute;left:14.3px;top:8.7px;width:20.5px;height:20.5px;color:#6b7790" viewBox="0 0 24 24" fill="currentColor"><path d="M2 18h7v2H2v-2zm0-7h9v2H2v-2zm0-7h20v2H2V4zm18.674 9.025l1.156-.391 1 1.732-.916.805a4.017 4.017 0 0 1 0 1.658l.916.805-1 1.732-1.156-.391c-.41.37-.898.655-1.435.83L19 21h-2l-.24-1.196a3.996 3.996 0 0 1-1.434-.83l-1.156.392-1-1.732.916-.805a4.017 4.017 0 0 1 0-1.658l-.916-.805 1-1.732 1.156.39c.41-.37.898-.655 1.435-.83L17 11h2l.24 1.196c.536.174 1.024.46 1.434.83zM18 18a2 2 0 1 0 0-4 2 2 0 0 0 0 4z"/></svg><span class="tt" style="color:#6b7790">发单设置</span><svg style="position:absolute;right:15.5px;top:15px;width:11px;height:11px" viewBox="0 0 11 11"><path d="M1 1L10 9.6M10 1L1 9.6" stroke="#7a8497" stroke-width="1.2"/></svg></div>
<div class="tab" style="left:1127.25px;width:135.75px"><svg style="position:absolute;left:14.3px;top:8.7px;width:20.5px;height:20.5px;color:#6b7790" viewBox="0 0 24 24" fill="currentColor"><path d="M20 22H4a1 1 0 0 1-1-1V3a1 1 0 0 1 1-1h16a1 1 0 0 1 1 1v18a1 1 0 0 1-1 1zm-1-2V4H5v16h14zM8 7h8v2H8V7zm0 4h8v2H8v-2zm0 4h8v2H8v-2z"/></svg><span class="tt" style="color:#6b7790">合买列表</span><svg style="position:absolute;right:15.5px;top:15px;width:11px;height:11px" viewBox="0 0 11 11"><path d="M1 1L10 9.6M10 1L1 9.6" stroke="#7a8497" stroke-width="1.2"/></svg></div>
<div class="tab" style="left:1272.25px;width:135.75px"><svg style="position:absolute;left:14.3px;top:8.7px;width:20.5px;height:20.5px;color:#6b7790" viewBox="0 0 24 24" fill="currentColor"><path d="M16 4a1 1 0 0 1 1 1v4.2l5.213-3.65a.5.5 0 0 1 .787.41v12.08a.5.5 0 0 1-.787.41L17 14.8V19a1 1 0 0 1-1 1H2a1 1 0 0 1-1-1V5a1 1 0 0 1 1-1h14zm-1 2H3v12h12V6zm2 5.6v.8l4 2.8V8.8l-4 2.8zM7 8.5l5 3.5-5 3.5v-7z"/></svg><span class="tt" style="color:#6b7790">实时监控</span><svg style="position:absolute;right:15.5px;top:15px;width:11px;height:11px" viewBox="0 0 11 11"><path d="M1 1L10 9.6M10 1L1 9.6" stroke="#7a8497" stroke-width="1.2"/></svg></div>
<div class="tab" style="left:1416.50px;width:135.75px"><svg style="position:absolute;left:14.3px;top:8.7px;width:20.5px;height:20.5px;color:#6b7790" viewBox="0 0 24 24" fill="currentColor"><path d="M7 6V3a1 1 0 0 1 1-1h8a1 1 0 0 1 1 1v3h5v2h-2v13a1 1 0 0 1-1 1H5a1 1 0 0 1-1-1V8H2V6h5zm2-2v2h6V4H9zM6 8v12h12V8H6zm3 3h2v6H9v-6zm4 0h2v6h-2v-6z"/></svg><span class="tt" style="color:#6b7790">数据清理</span><svg style="position:absolute;right:15.5px;top:15px;width:11px;height:11px" viewBox="0 0 11 11"><path d="M1 1L10 9.6M10 1L1 9.6" stroke="#7a8497" stroke-width="1.2"/></svg></div>
<div class="tab" style="left:1561.50px;width:135.10px"><svg style="position:absolute;left:14.3px;top:8.7px;width:20.5px;height:20.5px;color:#6b7790" viewBox="0 0 24 24" fill="currentColor"><path d="M12 22C6.477 22 2 17.523 2 12S6.477 2 12 2s10 4.477 10 10-4.477 10-10 10zm0-2a8 8 0 1 0 0-16 8 8 0 0 0 0 16zm1-8h4v2h-6V7h2v5z"/></svg><span class="tt" style="color:#6b7790">计划任务</span><svg style="position:absolute;right:15.5px;top:15px;width:11px;height:11px" viewBox="0 0 11 11"><path d="M1 1L10 9.6M10 1L1 9.6" stroke="#7a8497" stroke-width="1.2"/></svg></div>
<div class="tab" style="left:1705.40px;width:150.00px"><svg style="position:absolute;left:14.3px;top:8.7px;width:20.5px;height:20.5px;color:#6b7790" viewBox="0 0 24 24" fill="currentColor"><path d="M18.5 10l4.4 11h-2.155l-1.201-3h-4.09l-1.199 3h-2.154L16.5 10h2zM10 2v2h6v2h-1.968a18.222 18.222 0 0 1-3.62 6.301 14.864 14.864 0 0 0 2.336 1.707l-.751 1.878A17.015 17.015 0 0 1 9 13.725a16.676 16.676 0 0 1-6.201 3.548l-.536-1.929a14.7 14.7 0 0 0 5.327-3.042A18.078 18.078 0 0 1 4.767 8h2.24A16.032 16.032 0 0 0 9 10.877a16.165 16.165 0 0 0 2.91-4.876L2 6V4h6V2h2zm7.5 10.885L16.253 16h2.492L17.5 12.885z"/></svg><span class="tt" style="color:#6b7790">多语言配置</span><svg style="position:absolute;right:15.5px;top:15px;width:11px;height:11px" viewBox="0 0 11 11"><path d="M1 1L10 9.6M10 1L1 9.6" stroke="#7a8497" stroke-width="1.2"/></svg></div>
<div class="tab" style="left:1864.40px;width:135.60px"><svg style="position:absolute;left:14.3px;top:8.7px;width:20.5px;height:20.5px;color:#6b7790" viewBox="0 0 24 24" fill="currentColor"><path d="M20 22H4a1 1 0 0 1-1-1V3a1 1 0 0 1 1-1h16a1 1 0 0 1 1 1v18a1 1 0 0 1-1 1zm-1-2V4H5v16h14zM8 7h8v2H8V7zm0 4h8v2H8v-2zm0 4h8v2H8v-2z"/></svg><span class="tt" style="color:#6b7790">操作日志</span><svg style="position:absolute;right:15.5px;top:15px;width:11px;height:11px" viewBox="0 0 11 11"><path d="M1 1L10 9.6M10 1L1 9.6" stroke="#7a8497" stroke-width="1.2"/></svg></div>
<div class="tab" style="left:2009.00px;width:167.00px"><svg style="position:absolute;left:14.3px;top:8.7px;width:20.5px;height:20.5px;color:#6189ee" viewBox="0 0 24 24" fill="currentColor"><path d="M19 21H5a1 1 0 0 1-1-1v-9H1l10.327-9.388a1 1 0 0 1 1.346 0L23 11h-3v9a1 1 0 0 1-1 1zM6 19h12V9.157l-6-5.454-6 5.454V19zm2.591-5.191a3.508 3.508 0 0 1 0-1.622l-.991-.573 1-1.732.991.573a3.495 3.495 0 0 1 1.404-.812V8.5h2v1.144c.532.159 1.01.44 1.403.812l.992-.573 1 1.731-.991.573a3.508 3.508 0 0 1 0 1.623l.991.572-1 1.731-.991-.572a3.495 3.495 0 0 1-1.404.811v1.145h-2V16.35a3.495 3.495 0 0 1-1.403-.812l-.992.573-1-1.731.991-.573zm3.404.688a1.5 1.5 0 1 0 0-2.998 1.5 1.5 0 0 0 0 2.998z"/></svg><span class="tt" style="color:#6189ee">首页开奖配置</span><svg style="position:absolute;right:15.5px;top:15px;width:11px;height:11px" viewBox="0 0 11 11"><path d="M1 1L10 9.6M10 1L1 9.6" stroke="#7a8497" stroke-width="1.2"/></svg></div>
</div>
<div class="tabmore"><svg style="position:absolute;left:11.5px;top:15.5px;width:15px;height:9px" viewBox="0 0 15 9"><path d="M1 1L7.5 7.5 14 1" fill="none" stroke="#454b5a" stroke-width="1.6"/></svg></div>
<div class="card" style="left:334px;top:150px;width:2171px;height:105px"></div>
<div class="h1">首页开奖配置</div>
<div class="h1s">配置H5首页显示的彩种及顺序</div>
<div class="lbl">最大显示数量:</div>
<div class="inum"><div class="ib l"><svg style="position:absolute;left:9.5px;top:13.5px;width:11px;height:2px" viewBox="0 0 11 2"><path d="M0 1H11" stroke="#5a606b" stroke-width="1.3"/></svg></div><div class="iv">8</div><div class="ib r"><svg style="position:absolute;left:9.5px;top:8.5px;width:11px;height:11px" viewBox="0 0 11 11"><path d="M0 5.5H11M5.5 0V11" stroke="#5a606b" stroke-width="1.3"/></svg></div></div>
<div class="card" style="left:334px;top:275px;width:1075px;height:1000px"></div>
<div class="ptitle" style="left:364px">可选彩种</div>
<div class="btnp">全选</div>
<div id="llist">
<div class="li" style="top:0px"><div class="cb"><svg viewBox="0 0 20 20" style="width:20px;height:20px;position:absolute;left:0;top:0"><path d="M5.5 10.2l3 3 6-6.2" fill="none" stroke="#fff" stroke-width="2"/></svg></div><div class="it">1分快3</div><div class="is">f1k3 · 快3</div><div class="tag on">已开启</div></div>
<div class="li" style="top:92px"><div class="cb"><svg viewBox="0 0 20 20" style="width:20px;height:20px;position:absolute;left:0;top:0"><path d="M5.5 10.2l3 3 6-6.2" fill="none" stroke="#fff" stroke-width="2"/></svg></div><div class="it">3分快3</div><div class="is">f3k3 · 快3</div><div class="tag off">已关闭</div></div>
<div class="li" style="top:184px"><div class="cb"><svg viewBox="0 0 20 20" style="width:20px;height:20px;position:absolute;left:0;top:0"><path d="M5.5 10.2l3 3 6-6.2" fill="none" stroke="#fff" stroke-width="2"/></svg></div><div class="it">5分快3</div><div class="is">f5k3 · 快3</div><div class="tag off">已关闭</div></div>
<div class="li" style="top:276px"><div class="cb"><svg viewBox="0 0 20 20" style="width:20px;height:20px;position:absolute;left:0;top:0"><path d="M5.5 10.2l3 3 6-6.2" fill="none" stroke="#fff" stroke-width="2"/></svg></div><div class="it">10分快3</div><div class="is">sfks · 快3</div><div class="tag off">已关闭</div></div>
<div class="li" style="top:368px"><div class="cb"><svg viewBox="0 0 20 20" style="width:20px;height:20px;position:absolute;left:0;top:0"><path d="M5.5 10.2l3 3 6-6.2" fill="none" stroke="#fff" stroke-width="2"/></svg></div><div class="it">极速快3</div><div class="is">jisk3 · 快3</div><div class="tag off">已关闭</div></div>
<div class="li" style="top:460px"><div class="cb"><svg viewBox="0 0 20 20" style="width:20px;height:20px;position:absolute;left:0;top:0"><path d="M5.5 10.2l3 3 6-6.2" fill="none" stroke="#fff" stroke-width="2"/></svg></div><div class="it">分分28</div><div class="is">yfxy28 · 幸运28</div><div class="tag on">已开启</div></div>
<div class="li" style="top:552px"><div class="cb"><svg viewBox="0 0 20 20" style="width:20px;height:20px;position:absolute;left:0;top:0"><path d="M5.5 10.2l3 3 6-6.2" fill="none" stroke="#fff" stroke-width="2"/></svg></div><div class="it">腾讯分分彩</div><div class="is">txssc · 时时彩</div><div class="tag off">已关闭</div></div>
<div class="sbtrack"><div class="sbthumb"></div></div>
</div>
<div class="card" style="left:1428.5px;top:275px;width:1076.5px;height:1000px"></div>
<div class="ptitle" style="left:1460px">已选彩种（拖拽排序）</div>
<div class="btnd">清空</div>
<div class="ri" style="top:345px"><div class="num">1</div><div class="it" style="left:75.5px">1分快3</div><div class="is" style="left:75.5px">f1k3</div><div class="rm"><svg viewBox="0 0 30 30" style="position:absolute;left:-1px;top:-1px;width:30px;height:30px"><path d="M11 11L19 19M19 11L11 19" stroke="#e5484d" stroke-width="1.4"/></svg></div></div>
<div class="ri" style="top:437px"><div class="num">2</div><div class="it" style="left:75.5px">3分快3</div><div class="is" style="left:75.5px">f3k3</div><div class="rm"><svg viewBox="0 0 30 30" style="position:absolute;left:-1px;top:-1px;width:30px;height:30px"><path d="M11 11L19 19M19 11L11 19" stroke="#e5484d" stroke-width="1.4"/></svg></div></div>
<div class="ri" style="top:529px"><div class="num">3</div><div class="it" style="left:75.5px">5分快3</div><div class="is" style="left:75.5px">f5k3</div><div class="rm"><svg viewBox="0 0 30 30" style="position:absolute;left:-1px;top:-1px;width:30px;height:30px"><path d="M11 11L19 19M19 11L11 19" stroke="#e5484d" stroke-width="1.4"/></svg></div></div>
<div class="ri" style="top:621px"><div class="num">4</div><div class="it" style="left:75.5px">10分快3</div><div class="is" style="left:75.5px">sfks</div><div class="rm"><svg viewBox="0 0 30 30" style="position:absolute;left:-1px;top:-1px;width:30px;height:30px"><path d="M11 11L19 19M19 11L11 19" stroke="#e5484d" stroke-width="1.4"/></svg></div></div>
<div class="ri" style="top:713px"><div class="num">5</div><div class="it" style="left:75.5px">极速快3</div><div class="is" style="left:75.5px">jisk3</div><div class="rm"><svg viewBox="0 0 30 30" style="position:absolute;left:-1px;top:-1px;width:30px;height:30px"><path d="M11 11L19 19M19 11L11 19" stroke="#e5484d" stroke-width="1.4"/></svg></div></div>
<div class="ri" style="top:805px"><div class="num">6</div><div class="it" style="left:75.5px">分分28</div><div class="is" style="left:75.5px">yfxy28</div><div class="rm"><svg viewBox="0 0 30 30" style="position:absolute;left:-1px;top:-1px;width:30px;height:30px"><path d="M11 11L19 19M19 11L11 19" stroke="#e5484d" stroke-width="1.4"/></svg></div></div>
<div class="ri" style="top:897px"><div class="num">7</div><div class="it" style="left:75.5px">腾讯分分彩</div><div class="is" style="left:75.5px">txssc</div><div class="rm"><svg viewBox="0 0 30 30" style="position:absolute;left:-1px;top:-1px;width:30px;height:30px"><path d="M11 11L19 19M19 11L11 19" stroke="#e5484d" stroke-width="1.4"/></svg></div></div>
<div class="ri" style="top:989px"><div class="num">8</div><div class="it" style="left:75.5px">南京28</div><div class="is" style="left:75.5px">nj28</div><div class="rm"><svg viewBox="0 0 30 30" style="position:absolute;left:-1px;top:-1px;width:30px;height:30px"><path d="M11 11L19 19M19 11L11 19" stroke="#e5484d" stroke-width="1.4"/></svg></div></div>
<div class="ri" style="top:1081px"><div class="num">9</div><div class="it" style="left:75.5px">山东28</div><div class="is" style="left:75.5px">sd28</div><div class="rm"><svg viewBox="0 0 30 30" style="position:absolute;left:-1px;top:-1px;width:30px;height:30px"><path d="M11 11L19 19M19 11L11 19" stroke="#e5484d" stroke-width="1.4"/></svg></div></div>
<div class="ri" style="top:1173px"><div class="num">10</div><div class="it" style="left:75.5px">福彩3D</div><div class="is" style="left:75.5px">fc3d</div><div class="rm"><svg viewBox="0 0 30 30" style="position:absolute;left:-1px;top:-1px;width:30px;height:30px"><path d="M11 11L19 19M19 11L11 19" stroke="#e5484d" stroke-width="1.4"/></svg></div></div>
<div class="pop"><div class="arrow"></div><div class="pt" style="top:16px">点击这里查看<span class="bl">主题风格</span>、</div><div class="pt" style="top:41px"><span class="bl">开启顶栏菜单</span>等更多配置</div></div>
<div class="psb"><div class="psbt"></div></div></body></html>
